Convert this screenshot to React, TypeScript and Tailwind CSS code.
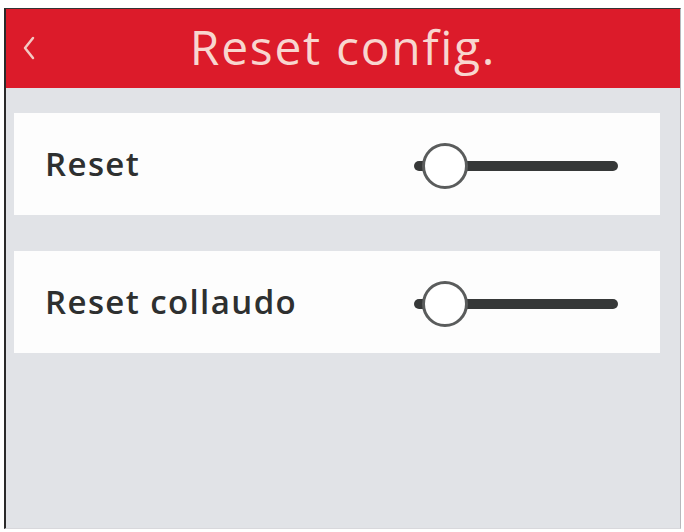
import React from "react";

function Slider() {
  return (
    <div className="relative w-[204px] h-[50px] flex items-center mt-[3px]">
      <div className="absolute left-0 right-0 top-[20px] h-[10px] rounded-full bg-[#363838]" />
      <div className="absolute left-[8px] top-[2px] w-[46px] h-[46px] rounded-full bg-white border-[3px] border-[#5a5c5c]" />
    </div>
  );
}

function Row({ label }: { label: string }) {
  return (
    <div className="bg-[#fdfdfd] h-[102px] flex items-center justify-between pl-[31px] pr-[42px]">
      <span
        className="text-[33px] font-semibold text-[#2e3030] tracking-[1.4px]"
        style={{ fontFamily: '"Open Sans", "Noto Sans", sans-serif' }}
      >
        {label}
      </span>
      <Slider />
    </div>
  );
}

export default function App() {
  return (
    <div className="w-[684px] h-[532px] bg-white pt-[8px] pl-[4px]">
      <div className="w-[677px] h-[521px] border-l-2 border-t border-r border-b border-l-[#2a2a2a] border-t-[#333] border-r-[#b8b8bc] border-b-[#d8d8dc] bg-[#e1e3e7] flex flex-col">
        <div className="h-[79px] bg-[#dc1b2a] relative flex items-center justify-center">
          <svg
            className="absolute left-[16px] top-[26px]"
            width="14"
            height="26"
            viewBox="0 0 14 26"
          >
            <path d="M11 3 L3 13 L11 23" fill="none" stroke="#f3c9c3" strokeWidth="2.5" strokeLinecap="round" strokeLinejoin="round" />
          </svg>
          <span
            className="text-[48px] text-[#f8d6cf] leading-none tracking-[1.7px] mt-[-4px]"
            style={{ fontFamily: '"Open Sans", "Noto Sans", sans-serif' }}
          >
            Reset config.
          </span>
        </div>
        <div className="flex flex-col gap-[36px] pt-[25px] pl-[8px] pr-[20px]">
          <Row label="Reset" />
          <Row label="Reset collaudo" />
        </div>
      </div>
    </div>
  );
}
